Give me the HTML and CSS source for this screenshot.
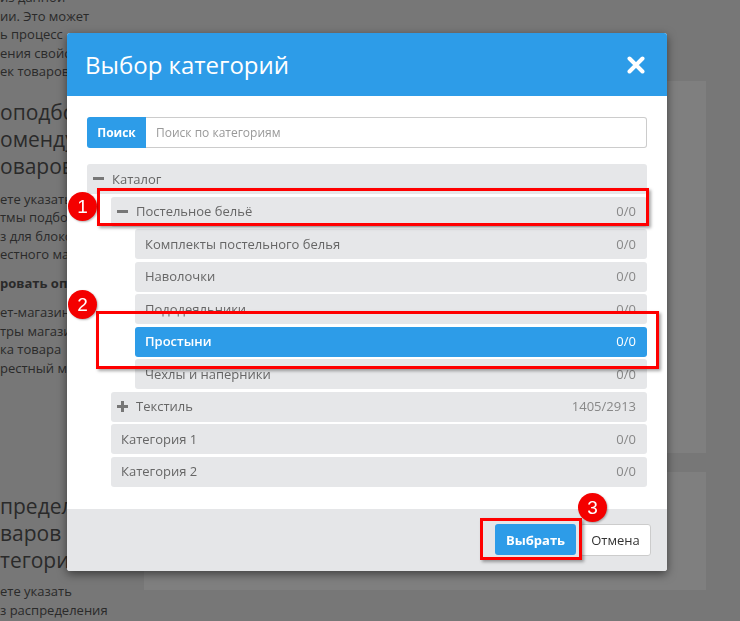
FILE: index.html
```html
<!DOCTYPE html>
<html lang="ru">
<head>
<meta charset="utf-8">
<title>Выбор категорий</title>
<link rel="stylesheet" href="styles.css">
</head>
<body>
<div class="page">
  <div class="side">
    <div class="txt txt-top">
      <div>из данной</div>
      <div>ии. Это может</div>
      <div>ь процесс</div>
      <div>ения свойств</div>
      <div>ек товаров</div>
    </div>
    <div class="head head-1">
      <div>оподбор</div>
      <div>омендуемых</div>
      <div>оваров</div>
    </div>
    <div class="txt txt-2">
      <div>ете указать</div>
      <div>тмы подбора</div>
      <div>з для блоков</div>
      <div>естного магазина</div>
    </div>
    <div class="txt txt-bold">ровать опции</div>
    <div class="txt txt-3">
      <div>ет-магазина</div>
      <div>тры магазина</div>
      <div>ка товара</div>
      <div>рестный магазин</div>
    </div>
    <div class="head head-2">
      <div>пределение</div>
      <div>варов по</div>
      <div>тегориям</div>
    </div>
    <div class="txt txt-4">
      <div>ете указать</div>
      <div>з распределения</div>
    </div>
  </div>
  <div class="main">
    <div class="panel panel-a"></div>
    <div class="panel panel-b"></div>
  </div>
</div>

<div class="overlay"></div>

<div class="modal">
  <div class="modal-header">
    <h1 class="modal-title">Выбор категорий</h1>
    <svg class="close" width="18" height="18" viewBox="0 0 18 18"><path d="M2.5 2.5L15.5 15.5M15.5 2.5L2.5 15.5" stroke="#fff" stroke-width="4" stroke-linecap="round"/></svg>
  </div>
  <div class="modal-body">
    <div class="search">
      <div class="search-btn">Поиск</div>
      <div class="search-input">Поиск по категориям</div>
    </div>
    <div class="tree">
      <div class="node">
        <div class="row row-toggle"><span class="toggle"></span><span class="label">Каталог</span></div>
        <div class="children">
          <div class="node">
            <div class="row row-toggle"><span class="toggle"></span><span class="label">Постельное бельё</span><span class="count">0/0</span></div>
            <div class="children">
              <div class="row"><span class="label">Комплекты постельного белья</span><span class="count">0/0</span></div>
              <div class="row"><span class="label">Наволочки</span><span class="count">0/0</span></div>
              <div class="row"><span class="label">Пододеяльники</span><span class="count">0/0</span></div>
              <div class="row selected"><span class="label">Простыни</span><span class="count">0/0</span></div>
              <div class="row"><span class="label">Чехлы и наперники</span><span class="count">0/0</span></div>
            </div>
          </div>
          <div class="row row-toggle"><span class="toggle plus"></span><span class="label">Текстиль</span><span class="count">1405/2913</span></div>
          <div class="row"><span class="label">Категория 1</span><span class="count">0/0</span></div>
          <div class="row"><span class="label">Категория 2</span><span class="count">0/0</span></div>
        </div>
      </div>
    </div>
  </div>
  <div class="modal-footer">
    <button class="btn btn-primary">Выбрать</button>
    <button class="btn btn-default">Отмена</button>
  </div>

  <div class="mark-box mark-box-1"></div>
  <div class="mark-box mark-box-2"></div>
  <div class="mark-box mark-box-3"></div>
  <div class="mark-num mark-num-1">1</div>
  <div class="mark-num mark-num-2">2</div>
  <div class="mark-num mark-num-3">3</div>
</div>
</body>
</html>
```

FILE: styles.css
```css
* { box-sizing: border-box; }

body {
  margin: 0;
  width: 740px;
  height: 621px;
  overflow: hidden;
  font-family: "Open Sans", "Liberation Sans", sans-serif;
  background: #eeeeee;
  color: #555;
}

.page {
  display: flex;
  height: 621px;
}

.side {
  width: 144px;
  flex: none;
  overflow: hidden;
  white-space: nowrap;
}

.txt {
  font-size: 13px;
  line-height: 18.5px;
}
.txt-top { margin-top: -12px; }
.txt-2 { margin-top: 10px; }
.txt-bold { margin-top: 10px; font-weight: 700; }
.txt-3 { margin-top: 11px; }
.txt-4 { margin-top: 8px; }

.head {
  font-size: 21px;
  line-height: 27px;
  color: #555;
}
.head-1 { margin-top: 18px; }
.head-2 { margin-top: 116px; }

.main {
  width: 562px;
  flex: none;
  padding-top: 81px;
  display: flex;
  flex-direction: column;
  gap: 19px;
}
.panel { background: #fff; }
.panel-a { height: 372px; }
.panel-b { height: 118px; }

.overlay {
  position: fixed;
  inset: 0;
  background: rgba(0, 0, 0, 0.5);
}

.modal {
  position: absolute;
  left: 67px;
  top: 33px;
  width: 600px;
  background: #fff;
  border-radius: 3px;
  box-shadow: 0 3px 10px rgba(0, 0, 0, 0.5);
}

.modal-header {
  height: 63px;
  background: #2d9ce8;
  border-radius: 3px 3px 0 0;
  display: flex;
  align-items: center;
  justify-content: space-between;
  padding: 0 22px 0 18px;
}
.modal-title {
  margin: 0;
  font-size: 24px;
  font-weight: 400;
  color: #fff;
}
.close { display: block; }

.modal-body {
  padding: 21px 20px 22px;
}

.search {
  display: flex;
  height: 31px;
}
.search-btn {
  width: 59px;
  background: #2d9ce8;
  color: #fff;
  font-size: 12px;
  font-weight: 700;
  border-radius: 3px 0 0 3px;
  display: flex;
  align-items: center;
  justify-content: center;
}
.search-input {
  flex: 1;
  border: 1px solid #cccccc;
  border-left: none;
  border-radius: 0 3px 3px 0;
  padding-left: 10px;
  font-size: 12px;
  color: #999;
  display: flex;
  align-items: center;
}

.tree {
  margin-top: 16px;
  display: flex;
  flex-direction: column;
  gap: 2.5px;
}
.node {
  display: flex;
  flex-direction: column;
  gap: 2.5px;
}
.children {
  padding-left: 24px;
  display: flex;
  flex-direction: column;
  gap: 2.5px;
}

.row {
  height: 30px;
  background: #e6e7e9;
  border-radius: 3px;
  display: flex;
  align-items: center;
  padding: 0 11px 1px 10px;
  font-size: 13px;
  color: #666;
}
.row-toggle { padding-left: 6px; }

.toggle {
  width: 11px;
  height: 11px;
  flex: none;
  margin-right: 8px;
  position: relative;
}
.toggle::before {
  content: "";
  position: absolute;
  left: 0;
  top: 4px;
  width: 11px;
  height: 3px;
  background: #777;
}
.toggle.plus::after {
  content: "";
  position: absolute;
  left: 4px;
  top: 0;
  width: 3px;
  height: 11px;
  background: #777;
}

.count {
  margin-left: auto;
  color: #888;
}

.row.selected {
  background: #2d9ce8;
  color: #fff;
}
.row.selected .label { font-weight: 600; }
.row.selected .count { color: #fff; }

.modal-footer {
  height: 62.5px;
  background: #e5e6e8;
  border-radius: 0 0 3px 3px;
  display: flex;
  justify-content: flex-end;
  align-items: center;
  gap: 4px;
  padding: 0 16px;
}
.btn {
  font-family: "Open Sans", "Liberation Sans", sans-serif;
  font-size: 13px;
  border-radius: 3px;
  padding: 0;
  cursor: pointer;
}
.btn-primary {
  width: 81px;
  height: 31px;
  border: none;
  background: #2d9ce8;
  color: #fff;
  font-weight: 700;
}
.btn-default {
  width: 71px;
  height: 32px;
  border: 1px solid #cccccc;
  background: #fff;
  color: #333;
}

.mark-box {
  position: absolute;
  border: 3px solid #ff0000;
  box-shadow: 2px 2px 3px rgba(0, 0, 0, 0.35);
}
.mark-box-1 { left: 30px; top: 155px; width: 552px; height: 38px; }
.mark-box-2 { left: 29px; top: 278px; width: 563px; height: 58px; }
.mark-box-3 { left: 413px; top: 485px; width: 102px; height: 42px; }

.mark-num {
  position: absolute;
  width: 29px;
  height: 29px;
  border-radius: 50%;
  background: #f40000;
  color: #fff;
  font-family: "Liberation Sans", sans-serif;
  font-size: 19px;
  display: flex;
  align-items: center;
  justify-content: center;
  box-shadow: 1px 1px 2px rgba(0, 0, 0, 0.3);
}
.mark-num-1 { left: 1px; top: 159px; }
.mark-num-2 { left: 1px; top: 257px; }
.mark-num-3 { left: 511px; top: 460px; }
```
